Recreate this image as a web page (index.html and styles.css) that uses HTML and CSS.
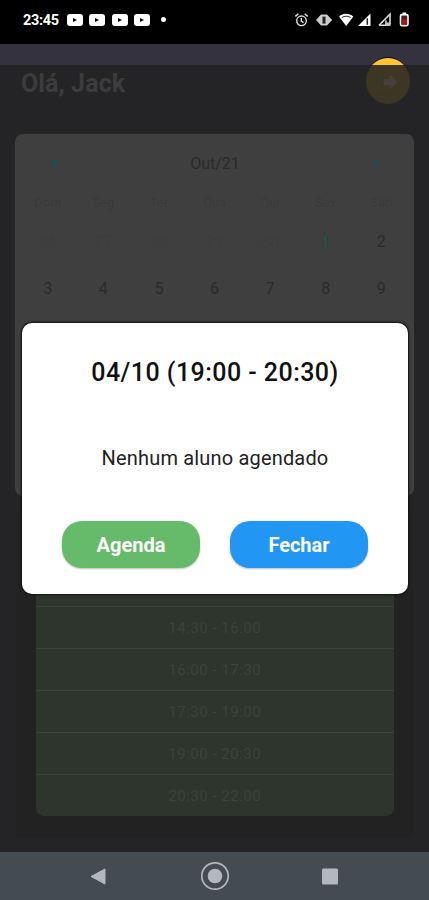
FILE: index.html
```
<!DOCTYPE html>
<html lang="pt-BR">

<head>
	<meta charset="UTF-8">
	<meta name="viewport" content="width=device-width, initial-scale=1.0">
	<title>Agenda</title>
	<link rel="stylesheet" href="styles.css">
</head>

<body>
	<div class="phone">
		<div class="status-bar">
			<div class="status-left">
				<span class="clock">23:45</span>
				<svg class="video" viewBox="0 0 16 12"><rect width="16" height="12" rx="3" fill="#fff"/><path d="M6 4L10 6L6 8z" fill="#000"/></svg>
				<svg class="video" viewBox="0 0 16 12"><rect width="16" height="12" rx="3" fill="#fff"/><path d="M6 4L10 6L6 8z" fill="#000"/></svg>
				<svg class="video" viewBox="0 0 16 12"><rect width="16" height="12" rx="3" fill="#fff"/><path d="M6 4L10 6L6 8z" fill="#000"/></svg>
				<svg class="video" viewBox="0 0 16 12"><rect width="16" height="12" rx="3" fill="#fff"/><path d="M6 4L10 6L6 8z" fill="#000"/></svg>
				<span class="dot"></span>
			</div>
			<svg class="status-icons" width="118" height="16" viewBox="0 0 118 16">
				<!-- alarm -->
				<g fill="none" stroke="#ddd" stroke-width="1.4">
					<circle cx="7.5" cy="8.8" r="4.8"/>
					<path d="M7.3 6v3.2l2.3 1.4M1.3 4.4l3-2.5M13.7 4.4l-3-2.5"/>
				</g>
				<!-- vibrate -->
				<path d="M27 2.6h6l5.2 5.4l-5.2 5.6h-6L22 8z" fill="#ccc"/>
				<rect x="28.5" y="4.6" width="3" height="7" fill="#222"/>
				<!-- wifi -->
				<path d="M45 4.5C49 .9 55 .9 59.3 4.5L52.2 14z" fill="#fff"/>
				<path d="M47.8 5.6C50.5 3.9 54 3.9 56.7 5.6" fill="none" stroke="#333" stroke-width="1.1"/>
				<!-- signal -->
				<path d="M64 14L76.5 1.5V14z" fill="#fff"/>
				<path d="M73.3 6.3v6.5" stroke="#222" stroke-width="1.5"/>
				<path d="M85 13.3L96 2.3V12.5M85 13.3h7V8.5" fill="none" stroke="#ddd" stroke-width="1.6"/>
				<path d="M92.5 10.5h4v3.5h-4z" fill="#ccc"/>
				<!-- battery -->
				<rect x="106.5" y="2.6" width="7.5" height="11" rx="1.5" fill="#422" stroke="#fff" stroke-width="1.6"/>
				<rect x="108.5" y="0.5" width="3.6" height="2.2" fill="#fff"/>
				<rect x="107.5" y="7.5" width="5.5" height="5.2" fill="#a51616"/>
			</svg>
		</div>

		<header class="header">
			<h1>Olá, Jack</h1>
			<div class="avatar">
				<svg width="24" height="24" viewBox="0 0 24 24"><path d="M14 5l7 7l-7 7v-4.5H8v-5h6z" fill="#454039" stroke="#454039" stroke-linejoin="round"/><path d="M9 5H3v14h6" fill="none" stroke="#3e3829" stroke-width="2"/></svg>
			</div>
		</header>

		<main class="content">
			<section class="calendar">
				<div class="month">
					<svg width="6" height="10" viewBox="0 0 6 10"><path d="M4.5 1L1.5 4.5l3 3.5z" fill="#17515b" stroke="#17515b" stroke-width="1.2"/></svg>
					<span>Out/21</span>
					<svg width="6" height="10" viewBox="0 0 6 10"><path d="M2 1L5 4.5l-3 3.5z" fill="#1b4f4c" stroke="#1b4f4c" stroke-width="1.2"/></svg>
				</div>
				<div class="week weekdays">
					<span>Dom</span><span>Seg</span><span>Ter</span><span>Qua</span><span>Qui</span><span>Sex</span><span>Sáb</span>
				</div>
				<div class="week">
					<span class="other">26</span><span class="other">27</span><span class="other">28</span><span class="other">29</span><span class="other">30</span><span class="today">1</span><span>2</span>
				</div>
				<div class="week">
					<span>3</span><span>4</span><span>5</span><span>6</span><span>7</span><span>8</span><span>9</span>
				</div>
			</section>

			<section class="schedule">
				<ul class="slots">
					<li>14:30 - 16:00</li>
					<li>16:00 - 17:30</li>
					<li>17:30 - 19:00</li>
					<li>19:00 - 20:30</li>
					<li>20:30 - 22:00</li>
				</ul>
			</section>
		</main>

		<nav class="nav-bar">
			<svg width="28" height="28" viewBox="0 0 28 28"><path d="M6 14.5L20 7v15z" fill="#b2b8bb" stroke="#b2b8bb" stroke-linejoin="round"/></svg>
			<svg width="30" height="30" viewBox="0 0 30 30"><circle cx="15" cy="15" r="13.2" fill="none" stroke="#b2b8bb" stroke-width="1.7"/><circle cx="15" cy="15" r="7.3" fill="#b2b8bb"/></svg>
			<svg width="28" height="28" viewBox="0 0 28 28"><rect x="6" y="6.5" width="16" height="16" rx="1.5" fill="#b2b8bb"/></svg>
		</nav>

		<div class="modal">
			<h2>04/10 (19:00 - 20:30)</h2>
			<p>Nenhum aluno agendado</p>
			<div class="buttons">
				<button class="btn btn-green">Agenda</button>
				<button class="btn btn-blue">Fechar</button>
			</div>
		</div>
	</div>
</body>

</html>
```
FILE: styles.css
```
* {
	box-sizing: border-box;
}

body {
	margin: 0;
	font-family: Roboto, sans-serif;
	background-color: #242426;
}

.phone {
	position: relative;
	display: flex;
	flex-direction: column;
	width: 429px;
	height: 900px;
	overflow: hidden;
	background-color: #242426;
}

.status-bar {
	display: flex;
	justify-content: space-between;
	align-items: center;
	height: 44px;
	padding: 0 17px 5px 23px;
	background-color: #000;
	color: #fff;
}

.status-left {
	display: flex;
	align-items: center;
}

.clock {
	width: 44px;
	padding-top: 1px;
	font-size: 14.5px;
	font-weight: 700;
	letter-spacing: -0.3px;
}

.video {
	width: 16px;
	height: 12px;
	margin-right: 6.3px;
}

.dot {
	width: 5px;
	height: 5px;
	margin-left: 5px;
	border-radius: 50%;
	background-color: #fff;
}

/* the top strip stays outside of the dimmed area */
.header {
	display: flex;
	justify-content: space-between;
	align-items: flex-start;
	height: 90px;
	padding: 14px 19px 0 21px;
	background: linear-gradient(#34323f 21px, #242426 21px);
}

h1 {
	margin: 10px 0 0;
	font-size: 25px;
	line-height: 31px;
	font-weight: 700;
	letter-spacing: 0.1px;
	color: #3c3c3d;
}

.avatar {
	display: flex;
	justify-content: center;
	align-items: center;
	width: 44px;
	height: 46px;
	padding-top: 2px;
	border-radius: 50%;
	background: linear-gradient(#fcc52c 7px, #3c3623 7px);
	box-shadow: 0 -2px 1px -1px #08082c;
}

.content {
	flex: 1;
	padding: 0 15px;
}

.calendar {
	height: 362px;
	padding: 9px 5px;
	border-radius: 8px;
	background-color: #3f3f3f;
	color: #2a2a2a;
	font-size: 16px;
}

.month {
	display: flex;
	justify-content: space-between;
	align-items: center;
	height: 40px;
	padding: 0 30px 0 31px;
}

.week {
	display: grid;
	grid-template-columns: repeat(7, 1fr);
	height: 47px;
	line-height: 47px;
	text-align: center;
}

.weekdays {
	height: 35px;
	line-height: 40px;
	font-size: 13px;
	color: #3a3a3a;
}

.other {
	color: #3d3d3d;
}

.today {
	color: #175847;
}

.schedule {
	height: 326px;
	margin: 16px 1px 0;
	padding: 51px 19.5px 0 20px;
	background-color: #222222;
}

.slots {
	margin: 0;
	padding: 42.5px 0 0;
	list-style: none;
	border-radius: 8px;
	background-color: #2d352d;
	color: #3c423c;
	font-size: 15px;
	letter-spacing: 0.5px;
	text-align: center;
}

.slots li {
	height: 42.2px;
	line-height: 43px;
	border-top: 1px solid #3a433a;
}

.nav-bar {
	display: flex;
	justify-content: space-between;
	align-items: center;
	height: 48px;
	padding: 0 85px;
	background-color: #444c52;
}

.modal {
	position: absolute;
	top: 323px;
	left: 22px;
	width: 386px;
	height: 271px;
	padding: 35px 40px 0;
	border-radius: 10px;
	background-color: #fff;
	box-shadow: 0 0 2px 1px #111;
	color: #111;
	text-align: center;
}

h2 {
	margin: 0;
	font-size: 25px;
	line-height: 30px;
	font-weight: 500;
	letter-spacing: 0.45px;
	white-space: nowrap;
}

.modal p {
	margin: 55px 0 47.5px;
	font-size: 20px;
	line-height: 30px;
	letter-spacing: 0.17px;
	color: #222;
}

.buttons {
	display: flex;
	justify-content: space-between;
}

.btn {
	width: 138px;
	height: 47px;
	padding: 2px 0 0;
	border: none;
	border-radius: 20px;
	box-shadow: 0 1px 2px rgba(0, 0, 0, 0.25);
	color: #fff;
	font-family: inherit;
	font-size: 20px;
	font-weight: 700;
}

.btn-green {
	background-color: #66bb6a;
}

.btn-blue {
	background-color: #2196f3;
}
```
